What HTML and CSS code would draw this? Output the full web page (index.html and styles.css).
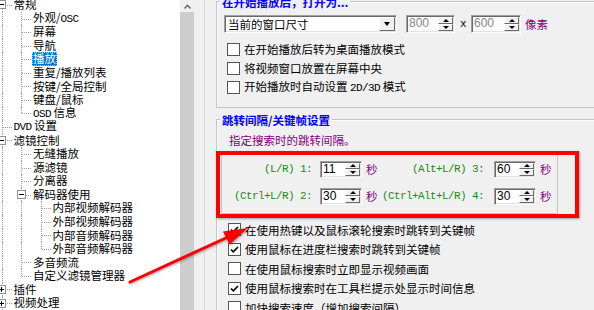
FILE: index.html
```html
<!DOCTYPE html>
<html lang="zh-CN">
<head>
<meta charset="utf-8">
<title>播放</title>
<link rel="stylesheet" href="styles.css">
</head>
<body>
<div class="app">
  <div class="tree-pane">
    <div class="tree">
      <div class="row"><span class="g t"><span class="box"></span></span><span class="lbl">常规</span></div>
      <div class="row"><span class="g v"></span><span class="g t"></span><span class="lbl">外观/<span class="mono">OSC</span></span></div>
      <div class="row"><span class="g v"></span><span class="g t"></span><span class="lbl">屏幕</span></div>
      <div class="row"><span class="g v"></span><span class="g t"></span><span class="lbl">导航</span></div>
      <div class="row"><span class="g v"></span><span class="g t"></span><span class="lbl sel">播放</span></div>
      <div class="row"><span class="g v"></span><span class="g t"></span><span class="lbl">重复/播放列表</span></div>
      <div class="row"><span class="g v"></span><span class="g t"></span><span class="lbl">按键/全局控制</span></div>
      <div class="row"><span class="g v"></span><span class="g t"></span><span class="lbl">键盘/鼠标</span></div>
      <div class="row"><span class="g v"></span><span class="g l"></span><span class="lbl"><span class="mono">OSD</span> 信息</span></div>
      <div class="row"><span class="g t"></span><span class="lbl"><span class="mono">DVD</span> 设置</span></div>
      <div class="row"><span class="g t"><span class="box"></span></span><span class="lbl">滤镜控制</span></div>
      <div class="row"><span class="g v"></span><span class="g t"></span><span class="lbl">无缝播放</span></div>
      <div class="row"><span class="g v"></span><span class="g t"></span><span class="lbl">源滤镜</span></div>
      <div class="row"><span class="g v"></span><span class="g t"></span><span class="lbl">分离器</span></div>
      <div class="row"><span class="g v"></span><span class="g t"><span class="box"></span></span><span class="lbl">解码器使用</span></div>
      <div class="row"><span class="g v"></span><span class="g v"></span><span class="g t"></span><span class="lbl">内部视频解码器</span></div>
      <div class="row"><span class="g v"></span><span class="g v"></span><span class="g t"></span><span class="lbl">外部视频解码器</span></div>
      <div class="row"><span class="g v"></span><span class="g v"></span><span class="g t"></span><span class="lbl">内部音频解码器</span></div>
      <div class="row"><span class="g v"></span><span class="g v"></span><span class="g l"></span><span class="lbl">外部音频解码器</span></div>
      <div class="row"><span class="g v"></span><span class="g t"></span><span class="lbl">多音频流</span></div>
      <div class="row"><span class="g v"></span><span class="g l"></span><span class="lbl">自定义滤镜管理器</span></div>
      <div class="row"><span class="g t"><span class="box plus"></span></span><span class="lbl">插件</span></div>
      <div class="row"><span class="g t"><span class="box plus"></span></span><span class="lbl">视频处理</span></div>
      <div class="row"><span class="g t"><span class="box plus"></span></span><span class="lbl">音频处理</span></div>
    </div>
  </div>

  <div class="vscroll">
    <div class="sb-up">
      <svg width="7" height="5" viewBox="0 0 7 5"><path d="M0.5 4.5 L3.5 1.2 L6.5 4.5" fill="none" stroke="#606060" stroke-width="1.3"/></svg>
    </div>
    <div class="sb-thumb"></div>
  </div>

  <div class="panel">
    <div class="group g1">
      <div class="gtitle">在开始播放后，打开为...</div>
      <div class="combo-row">
        <div class="combo">
          <span class="combo-text">当前的窗口尺寸</span>
          <span class="combo-btn"><span class="tri-down"></span></span>
        </div>
        <div class="spin dis w49"><span class="val">800</span><span class="btns"><span class="sbtn"><span class="tri-up"></span></span><span class="sbtn"><span class="tri-down small"></span></span></span></div>
        <span class="x mono">x</span>
        <div class="spin dis w50"><span class="val">600</span><span class="btns"><span class="sbtn"><span class="tri-up"></span></span><span class="sbtn"><span class="tri-down small"></span></span></span></div>
        <span class="unit">像素</span>
      </div>
      <div class="chklist c1">
        <div class="chk-row"><span class="cb"></span><span class="cl">在开始播放后转为桌面播放模式</span></div>
        <div class="chk-row"><span class="cb"></span><span class="cl">将视频窗口放置在屏幕中央</span></div>
        <div class="chk-row"><span class="cb"></span><span class="cl">开始播放时自动设置 <span class="mono">2D/3D</span> 模式</span></div>
      </div>
    </div>

    <div class="group g2">
      <div class="gtitle">跳转间隔/关键帧设置</div>
      <div class="desc">指定搜索时的跳转间隔。</div>
      <div class="inner">
        <div class="igrid">
          <span class="glabel mono">(L/R) 1:</span>
          <div class="spin w42"><span class="val">11</span><span class="btns"><span class="sbtn"><span class="tri-up"></span></span><span class="sbtn"><span class="tri-down small"></span></span></span></div>
          <span class="sec">秒</span>
          <span class="glabel mono">(Alt+L/R) 3:</span>
          <div class="spin w42 far"><span class="val">60</span><span class="btns"><span class="sbtn"><span class="tri-up"></span></span><span class="sbtn"><span class="tri-down small"></span></span></span></div>
          <span class="sec">秒</span>

          <span class="glabel mono">(Ctrl+L/R) 2:</span>
          <div class="spin w42"><span class="val">30</span><span class="btns"><span class="sbtn"><span class="tri-up"></span></span><span class="sbtn"><span class="tri-down small"></span></span></span></div>
          <span class="sec">秒</span>
          <span class="glabel mono">(Ctrl+Alt+L/R) 4:</span>
          <div class="spin w42 far"><span class="val">30</span><span class="btns"><span class="sbtn"><span class="tri-up"></span></span><span class="sbtn"><span class="tri-down small"></span></span></span></div>
          <span class="sec">秒</span>
        </div>
        <div class="annot"></div>
      </div>
      <div class="chklist c2">
        <div class="chk-row"><span class="cb on"><svg width="11" height="11" viewBox="0 0 11 11"><path d="M2 5.5 L4.3 7.8 L9 3" fill="none" stroke="#000" stroke-width="1.7"/></svg></span><span class="cl">在使用热键以及鼠标滚轮搜索时跳转到关键帧</span></div>
        <div class="chk-row"><span class="cb on"><svg width="11" height="11" viewBox="0 0 11 11"><path d="M2 5.5 L4.3 7.8 L9 3" fill="none" stroke="#000" stroke-width="1.7"/></svg></span><span class="cl">使用鼠标在进度栏搜索时跳转到关键帧</span></div>
        <div class="chk-row"><span class="cb"></span><span class="cl">在使用鼠标搜索时立即显示视频画面</span></div>
        <div class="chk-row"><span class="cb on"><svg width="11" height="11" viewBox="0 0 11 11"><path d="M2 5.5 L4.3 7.8 L9 3" fill="none" stroke="#000" stroke-width="1.7"/></svg></span><span class="cl">使用鼠标搜索时在工具栏提示处显示时间信息</span></div>
        <div class="chk-row"><span class="cb"></span><span class="cl">加快搜索速度（增加搜索间隔）</span></div>
      </div>
    </div>
  </div>
</div>

<svg class="arrow" width="594" height="310" viewBox="0 0 594 310">
  <line x1="130" y1="282" x2="228" y2="237" stroke="#ff0000" stroke-width="3" stroke-linecap="round"/>
  <polygon points="248,228 229.5,244.5 223,231.5" fill="#ff0000"/>
</svg>
</body>
</html>
```
FILE: styles.css
```css
html, body {
  margin: 0;
  padding: 0;
}

body {
  width: 594px;
  height: 310px;
  overflow: hidden;
  position: relative;
  background: #f0f0f0;
  color: #000;
  font-family: "Noto Sans CJK SC", "Noto Sans", sans-serif;
  font-size: 11.5px;
}

.mono {
  font-family: "Liberation Mono", monospace;
  font-size: 11px;
  letter-spacing: -0.6px;
}

.app {
  display: flex;
  width: 594px;
  height: 310px;
  overflow: hidden;
}

/* ---------- tree ---------- */
.tree-pane {
  width: 180px;
  flex: none;
  background: #fff;
  overflow: hidden;
}

.tree {
  margin: -1.8px 0 0 -8px;
}

.row {
  display: flex;
  height: 13.55px;
  align-items: center;
  white-space: nowrap;
}

.g {
  position: relative;
  width: 19.5px;
  height: 100%;
  flex: none;
  display: flex;
  align-items: center;
  justify-content: center;
}

.g::before {
  content: "";
  position: absolute;
  left: 9.5px;
  top: 0;
  bottom: 0;
  border-left: 1px dotted #a0a0a0;
}

.g.l::before {
  bottom: 50%;
}

.g.t::after,
.g.l::after {
  content: "";
  position: absolute;
  left: 10.5px;
  right: 0;
  top: 50%;
  border-top: 1px dotted #a0a0a0;
}

.box {
  position: relative;
  z-index: 1;
  width: 9px;
  height: 9px;
  box-sizing: border-box;
  border: 1px solid #919191;
  background: linear-gradient(#000, #000) center / 5px 1px no-repeat, #fff;
}

.box.plus {
  background: linear-gradient(#000, #000) center / 5px 1px no-repeat,
              linear-gradient(#000, #000) center / 1px 5px no-repeat, #fff;
}

.lbl {
  margin-left: 1px;
  padding: 0 1px;
  line-height: 13.5px;
}

.lbl.sel {
  background: #0078d7;
  color: #fff;
  outline: 1px dotted #9ccaf0;
  outline-offset: -1px;
}

/* ---------- scrollbar ---------- */
.vscroll {
  width: 17px;
  flex: none;
  background: #f0f0f0;
  display: flex;
  flex-direction: column;
}

.sb-up {
  height: 12px;
  display: flex;
  align-items: center;
  justify-content: center;
  padding-right: 3px;
}

.sb-thumb {
  flex: 1;
  margin-right: 3px;
  background: #cdcdcd;
}

/* ---------- right panel ---------- */
.panel {
  flex: none;
  width: 420px;
  margin-left: 7px;
  border-left: 1px solid #dadada;
  padding-left: 11px;
  padding-top: 1px;
}

.group {
  width: 420px;
  border: 1px solid #c4c4c4;
  box-shadow: inset 1px 1px 0 #fff;
}

.gtitle {
  width: fit-content;
  margin: -7px 0 0 3px;
  padding: 0 2px;
  background: #f0f0f0;
  color: #0000ff;
  font-weight: bold;
  line-height: 14px;
  white-space: nowrap;
}

.g1 {
  padding-bottom: 10.5px;
}

.combo-row {
  display: flex;
  align-items: center;
  height: 18px;
  margin: 6px 0 0 7px;
}

.combo {
  width: 173px;
  height: 18px;
  box-sizing: border-box;
  display: flex;
  align-items: center;
  background: #fff;
  border: 1px solid;
  border-color: #a0a0a0 #fff #fff #a0a0a0;
  box-shadow: inset 1px 1px 0 #696969, inset -1px -1px 0 #e3e3e3;
}

.combo-text {
  flex: 1;
  padding-left: 3px;
  line-height: 14px;
}

.combo-btn {
  width: 16px;
  height: 14px;
  margin-right: 1px;
  box-sizing: border-box;
  background: #f0f0f0;
  border: 1px solid;
  border-color: #fff #696969 #696969 #fff;
  display: flex;
  align-items: center;
  justify-content: center;
}

.tri-down {
  width: 0;
  height: 0;
  border-left: 3.5px solid transparent;
  border-right: 3.5px solid transparent;
  border-top: 4px solid #000;
}

.tri-down.small,
.tri-up {
  border-left-width: 3px;
  border-right-width: 3px;
}

.tri-down.small {
  border-top-width: 3px;
}

.tri-up {
  width: 0;
  height: 0;
  border-left: 3px solid transparent;
  border-right: 3px solid transparent;
  border-bottom: 3px solid #000;
}

.spin {
  height: 17px;
  box-sizing: border-box;
  display: flex;
  background: #fff;
  border: 1px solid;
  border-color: #a0a0a0 #fff #fff #a0a0a0;
  box-shadow: inset 1px 1px 0 #696969, inset -1px -1px 0 #e3e3e3;
  padding: 1px;
}

.spin.w49 { width: 49px; margin-left: 9px; height: 18px; }
.spin.w50 { width: 50px; height: 18px; }
.spin.w42 { width: 42px; margin-left: 8px; }
.spin.w42.far { margin-left: 10px; }

.spin .val {
  flex: 1;
  padding-left: 1px;
  font-family: "Liberation Sans", Arial, sans-serif;
  font-size: 12px;
  line-height: 13px;
}

.spin.dis .val {
  color: #8a8a8a;
}

.spin.dis {
  background: #fbfbfb;
}

.btns {
  width: 15px;
  display: flex;
  flex-direction: column;
}

.sbtn {
  flex: 1;
  box-sizing: border-box;
  background: #f0f0f0;
  border: 1px solid;
  border-color: #fff #696969 #696969 #fff;
  display: flex;
  align-items: center;
  justify-content: center;
}

.x {
  margin: 0 5px 0 5px;
}

.unit {
  margin-left: 4px;
  color: #800080;
}

.chklist.c1 {
  margin-top: 6.5px;
  padding-left: 10px;
}

.chk-row {
  display: flex;
  align-items: center;
  height: 19px;
  white-space: nowrap;
}

.cb {
  width: 13px;
  height: 13px;
  flex: none;
  box-sizing: border-box;
  border: 1px solid #555;
  background: #fff;
  display: flex;
  align-items: center;
  justify-content: center;
}

.cl {
  margin-left: 4px;
  line-height: 14px;
}

.g2 {
  margin-top: 11px;
  height: 300px;
}

.desc {
  margin: 6px 0 0 12px;
  color: #800080;
  line-height: 14px;
}

.inner {
  position: relative;
  width: 337px;
  height: 60px;
  box-sizing: border-box;
  margin: 7px 0 0 4px;
  border: 1px solid #c4c4c4;
  padding-top: 5px;
}

.igrid {
  display: grid;
  grid-template-columns: 90px 50px 16px 106px 52px 16px;
  grid-auto-rows: 18px;
  row-gap: 9px;
  align-items: center;
}

.glabel {
  text-align: right;
  white-space: pre;
  color: #1a8a1a;
}

.sec {
  margin-left: 4px;
  color: #800080;
}

.annot {
  position: absolute;
  left: -6px;
  top: -4px;
  right: -22px;
  bottom: -5px;
  border: 4px solid #ff0000;
  box-shadow: 1px 1px 2px rgba(0, 0, 0, 0.35);
}

.chklist.c2 {
  margin-top: 5.75px;
  padding-left: 11px;
}

.chklist.c2 .chk-row {
  height: 19.5px;
}

.arrow {
  position: absolute;
  left: 0;
  top: 0;
  pointer-events: none;
  filter: drop-shadow(1px 1px 1px rgba(0, 0, 0, 0.35));
}
```
